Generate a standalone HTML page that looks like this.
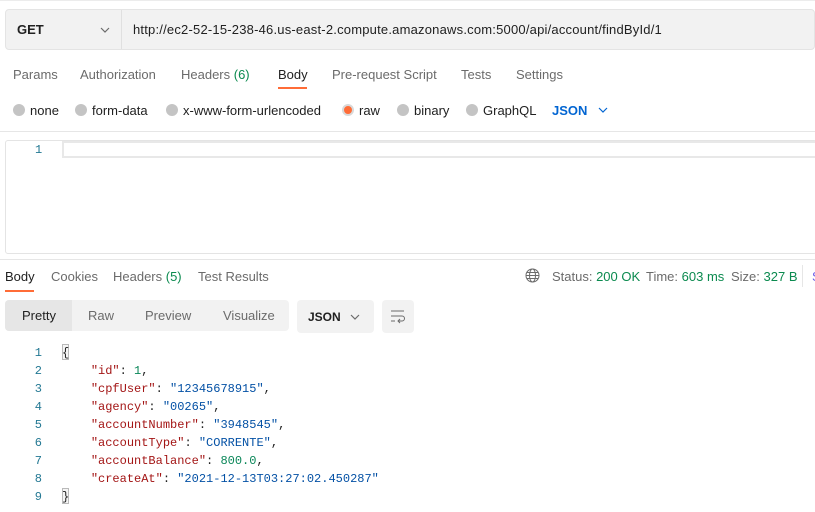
<!DOCTYPE html>
<html><head><meta charset="utf-8"><style>
*{margin:0;padding:0;box-sizing:border-box}
body{width:815px;height:512px;overflow:hidden;background:#fff;font-family:"Liberation Sans",sans-serif;font-size:13px;color:#212121;position:relative}
.a{position:absolute;white-space:nowrap}
.g{color:#6b6b6b}
.dot{position:absolute;width:12px;height:12px;border-radius:50%;background:#c4c4c4}
.mono{font-family:"Liberation Mono",monospace;font-size:12px}
.k{color:#a31515}.s{color:#0451a5}.n{color:#098658}
</style></head><body>
<div class="a" style="left:0;top:0;width:815px;height:1px;background:#ececec"></div>
<div class="a" style="left:5px;top:9px;width:810px;height:41px;background:#f2f2f2;border:1px solid #e4e4e4;border-radius:4px"></div>
<div class="a" style="left:121px;top:10px;width:1px;height:39px;background:#e0e0e0"></div>
<div class="a" style="left:17px;top:22px;font-weight:bold;color:#212121">GET</div>
<svg class="a" style="left:100px;top:27px" width="10" height="6"><path d="M1 1l4 4 4-4" fill="none" stroke="#6b6b6b" stroke-width="1.2"/></svg>
<div class="a" style="left:133px;top:22px;color:#212121;letter-spacing:0.2px">http://ec2-52-15-238-46.us-east-2.compute.amazonaws.com:5000/api/account/findById/1</div>
<div class="a g" style="left:13px;top:67px">Params</div>
<div class="a g" style="left:80px;top:67px">Authorization</div>
<div class="a g" style="left:181px;top:67px">Headers <span style="color:#0b8a4f">(6)</span></div>
<div class="a" style="left:278px;top:67px">Body</div>
<div class="a" style="left:278px;top:87px;width:29px;height:2px;background:#ff6c37"></div>
<div class="a g" style="left:332px;top:67px">Pre-request Script</div>
<div class="a g" style="left:461px;top:67px">Tests</div>
<div class="a g" style="left:516px;top:67px">Settings</div>
<div class="dot" style="left:13px;top:104px"></div><div class="a" style="left:30px;top:103px">none</div>
<div class="dot" style="left:75px;top:104px"></div><div class="a" style="left:92px;top:103px">form-data</div>
<div class="dot" style="left:166px;top:104px"></div><div class="a" style="left:183px;top:103px">x-www-form-urlencoded</div>
<div class="dot" style="left:342px;top:104px;background:#ff6c37;border:2px solid #d9d9d9"></div><div class="a" style="left:359px;top:103px">raw</div>
<div class="dot" style="left:397px;top:104px"></div><div class="a" style="left:414px;top:103px">binary</div>
<div class="dot" style="left:466px;top:104px"></div><div class="a" style="left:483px;top:103px">GraphQL</div>
<div class="a" style="left:552px;top:103px;color:#0265d2;font-weight:bold">JSON</div>
<svg class="a" style="left:598px;top:107px" width="10" height="6"><path d="M1 1l4 4 4-4" fill="none" stroke="#0265d2" stroke-width="1.2"/></svg>
<div class="a" style="left:0;top:131px;width:815px;height:1px;background:#e6e6e6"></div>
<div class="a" style="left:5px;top:140px;width:812px;height:114px;border:1px solid #e4e4e4;border-radius:3px"></div>
<div class="a" style="left:62px;top:141px;width:753px;height:17px;border:2px solid #e8e8e8;border-right:none"></div>
<div class="a mono" style="left:35px;top:143px;color:#237893">1</div>
<div class="a" style="left:0;top:259px;width:815px;height:1px;background:#e6e6e6"></div>
<div class="a" style="left:5px;top:269px">Body</div>
<div class="a" style="left:5px;top:290px;width:29px;height:2px;background:#ff6c37"></div>
<div class="a g" style="left:51px;top:269px">Cookies</div>
<div class="a g" style="left:113px;top:269px">Headers <span style="color:#0b8a4f">(5)</span></div>
<div class="a g" style="left:198px;top:269px">Test Results</div>
<svg class="a" style="left:525px;top:268px" width="15" height="15" fill="none" stroke="#6b6b6b" stroke-width="1"><circle cx="7.5" cy="7.5" r="6.5"/><ellipse cx="7.5" cy="7.5" rx="3" ry="6.5"/><path d="M1 7.5h13M2 4.5h11M2 10.5h11"/></svg>
<div class="a g" style="left:552px;top:269px">Status: <span style="color:#0b8a4f">200 OK</span></div>
<div class="a g" style="left:646px;top:269px">Time: <span style="color:#0b8a4f">603 ms</span></div>
<div class="a g" style="left:731px;top:269px">Size: <span style="color:#0b8a4f">327 B</span></div>
<div class="a" style="left:802px;top:265px;width:1px;height:22px;background:#e6e6e6"></div>
<div class="a" style="left:812px;top:269px;color:#6b5ce7">S</div>
<div class="a" style="left:5px;top:300px;width:284px;height:31px;background:#f2f2f2;border-radius:4px"></div>
<div class="a" style="left:5px;top:300px;width:67px;height:31px;background:#e6e6e6;border-radius:4px 0 0 4px"></div>
<div class="a" style="left:22px;top:308px">Pretty</div>
<div class="a g" style="left:88px;top:308px">Raw</div>
<div class="a g" style="left:145px;top:308px">Preview</div>
<div class="a g" style="left:223px;top:308px">Visualize</div>
<div class="a" style="left:297px;top:300px;width:77px;height:33px;background:#f2f2f2;border-radius:4px"></div>
<div class="a" style="left:308px;top:310px;font-weight:bold;font-size:12px">JSON</div>
<svg class="a" style="left:350px;top:314px" width="10" height="6"><path d="M1 1l4 4 4-4" fill="none" stroke="#6b6b6b" stroke-width="1.2"/></svg>
<div class="a" style="left:382px;top:300px;width:32px;height:33px;background:#f2f2f2;border-radius:4px"></div>
<svg class="a" style="left:390px;top:309px" width="16" height="15" fill="none" stroke="#6b6b6b" stroke-width="1"><path d="M1 2h13M1 7h11a2.5 2.5 0 0 1 0 5H8M10 10l-2 2 2 2M1 12h4"/></svg>
<div class="a mono" style="left:20px;top:344px;width:22px;text-align:right;color:#237893;line-height:18px;white-space:normal">1<br>2<br>3<br>4<br>5<br>6<br>7<br>8<br>9</div>
<div class="a" style="left:62px;top:344px;width:7px;height:16px;border:1px solid #b9b9b9;background:#f5f5f5"></div>
<div class="a" style="left:62px;top:488px;width:7px;height:16px;border:1px solid #b9b9b9;background:#f5f5f5"></div>
<pre class="a mono" style="left:62px;top:344px;line-height:18px;color:#222;white-space:pre">{
    <span class="k">"id"</span>: <span class="n">1</span>,
    <span class="k">"cpfUser"</span>: <span class="s">"12345678915"</span>,
    <span class="k">"agency"</span>: <span class="s">"00265"</span>,
    <span class="k">"accountNumber"</span>: <span class="s">"3948545"</span>,
    <span class="k">"accountType"</span>: <span class="s">"CORRENTE"</span>,
    <span class="k">"accountBalance"</span>: <span class="n">800.0</span>,
    <span class="k">"createAt"</span>: <span class="s">"2021-12-13T03:27:02.450287"</span>
}</pre>
</body></html>
